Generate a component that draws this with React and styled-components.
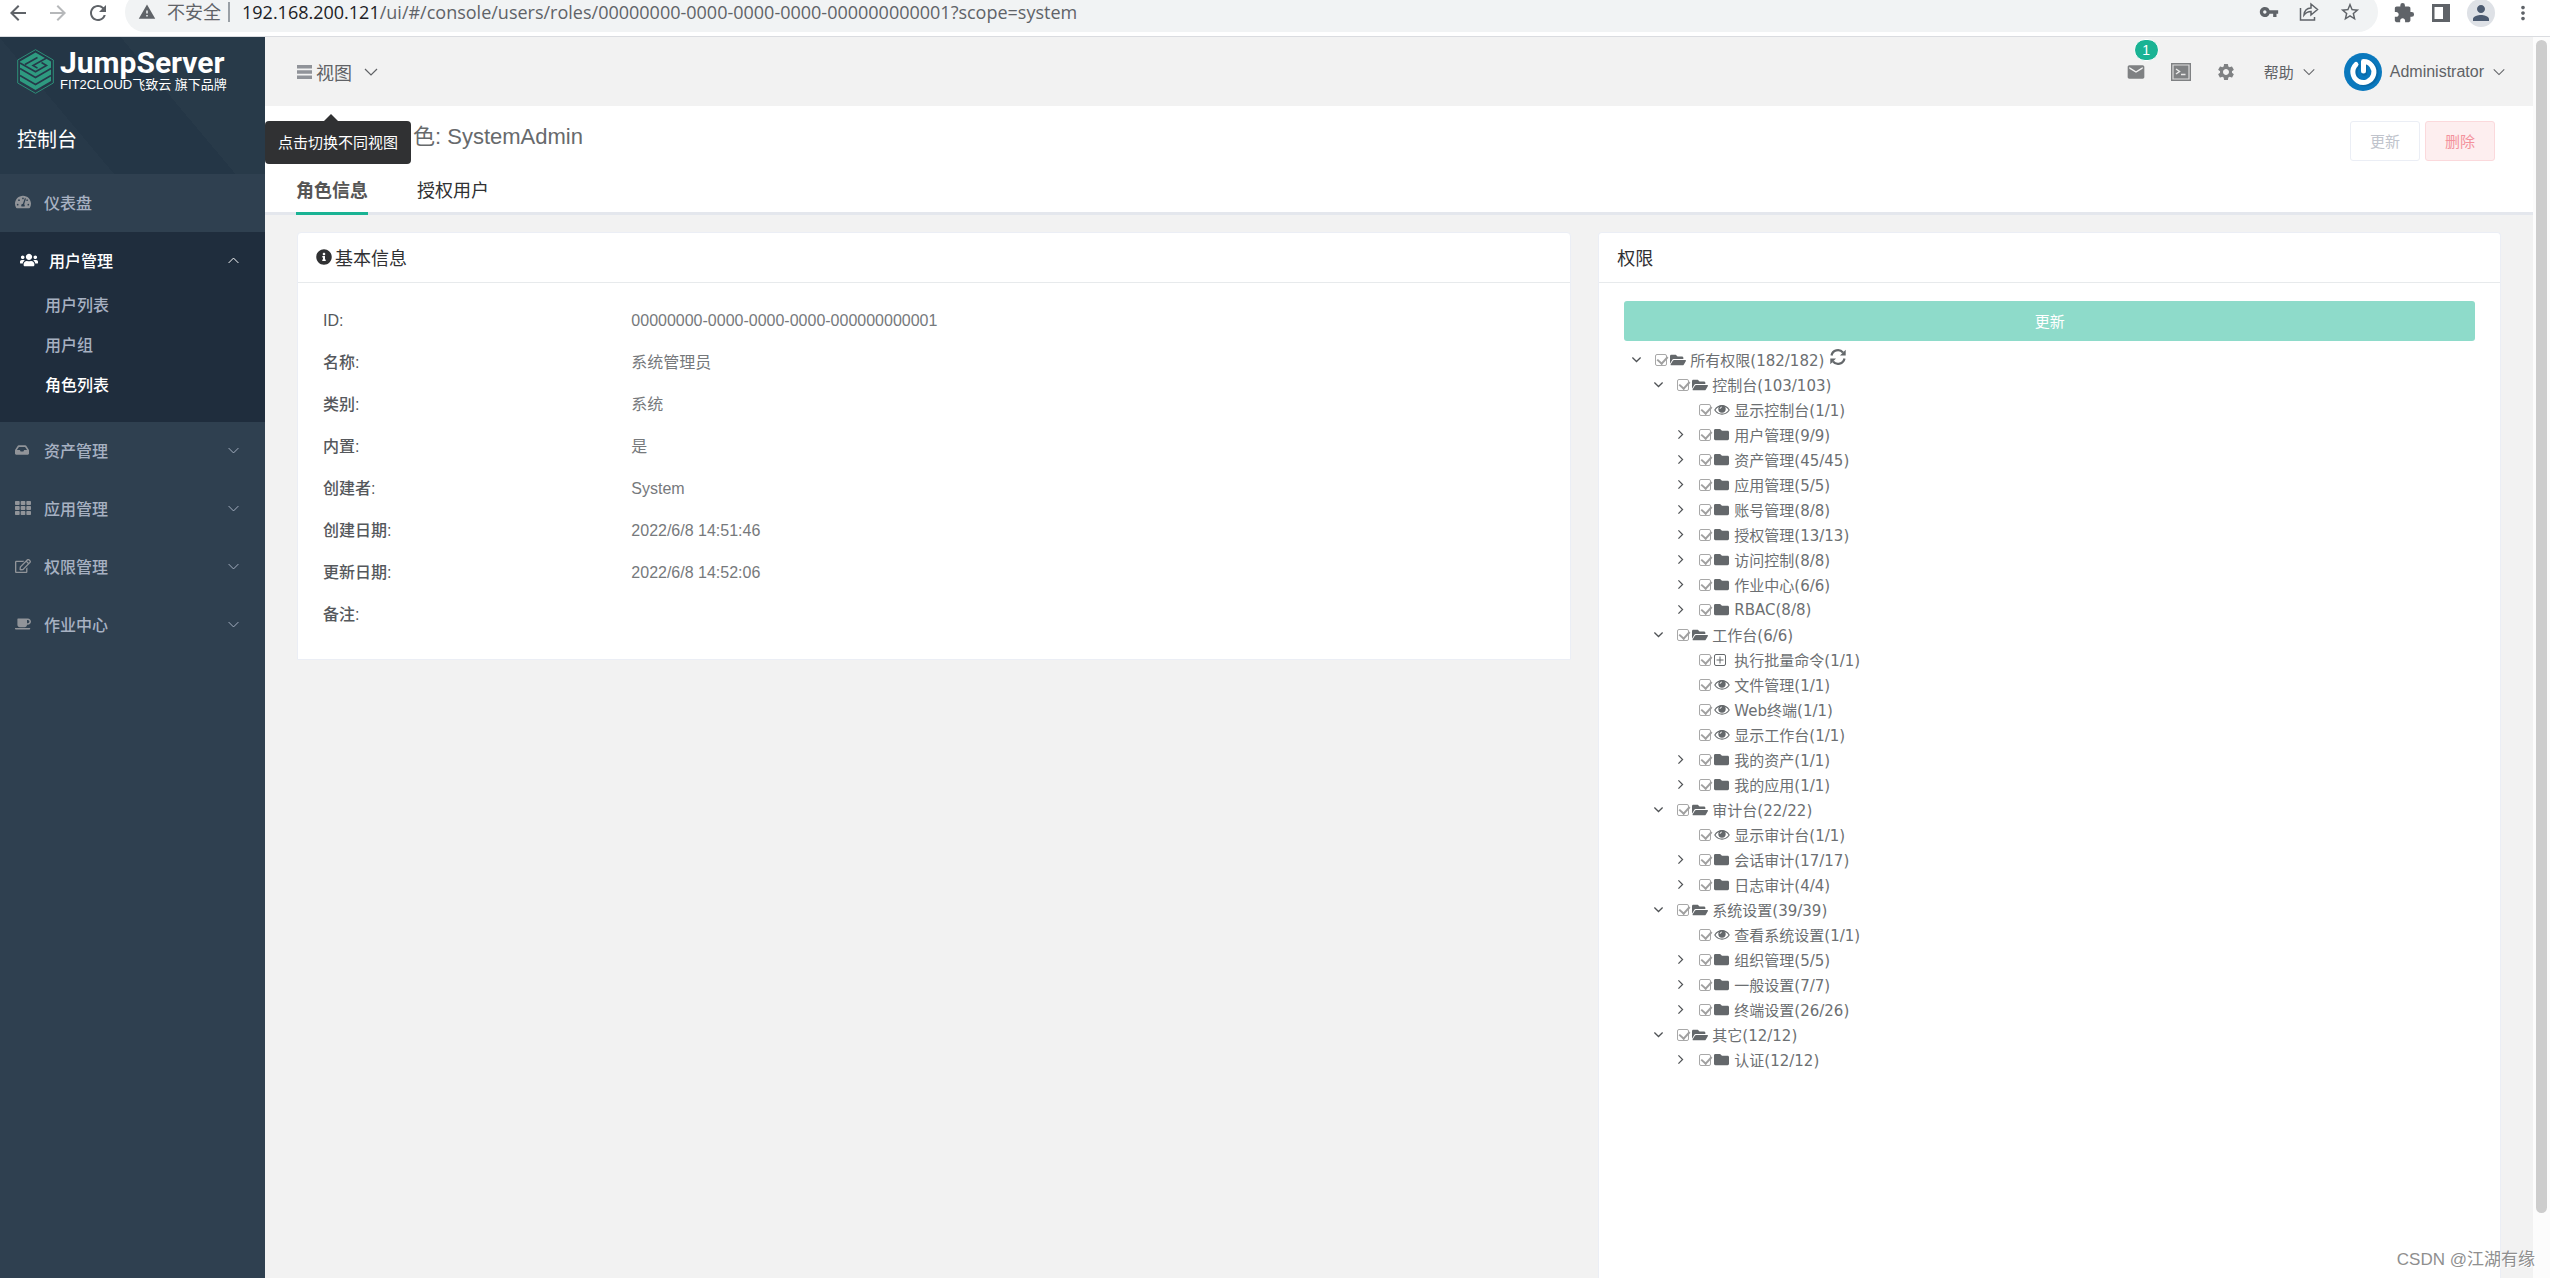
import React, { useState } from "react";
import styled, { createGlobalStyle, css } from "styled-components";
import {
  MdArrowBack,
  MdArrowForward,
  MdRefresh,
  MdWarning,
  MdVpnKey,
  MdStarBorder,
  MdExtension,
  MdPerson,
  MdMoreVert,
  MdEmail,
  MdSettings,
} from "react-icons/md";
import {
  FaTachometerAlt,
  FaUsers,
  FaInbox,
  FaTh,
  FaRegEdit,
  FaCoffee,
  FaInfoCircle,
  FaFolder,
  FaFolderOpen,
} from "react-icons/fa";

const GlobalStyle = createGlobalStyle`
  * {
    box-sizing: border-box;
  }

  body {
    margin: 0;
    overflow: hidden;
    font-family: "Liberation Sans", "Noto Sans CJK SC", sans-serif;
    font-size: 16px;
    color: #676a6c;
    background: #fff;
  }

  button {
    font-family: inherit;
    cursor: pointer;
  }

  svg {
    display: block;
    flex: none;
  }
`;

const Page = styled.div`
  display: flex;
  flex-direction: column;
  height: 100vh;
`;

/* browser bar */

const Browser = styled.div`
  display: flex;
  align-items: flex-start;
  gap: 15px;
  height: 37px;
  padding: 0 16px 0 6px;
  border-bottom: 1px solid #dadce0;
  background: #fff;
  color: #5f6368;
  overflow: hidden;
`;

const BrowserButtons = styled.div`
  display: flex;
  align-items: center;
  gap: 16px;
  height: 26px;
`;

const BrowserButton = styled.button`
  display: flex;
  padding: 0;
  border: 0;
  background: transparent;
  color: inherit;
  opacity: ${(p) => (p.disabled ? 0.45 : 1)};
`;

const Address = styled.div`
  display: flex;
  flex: 1;
  align-items: center;
  height: 40px;
  margin-top: -8px;
  padding: 0 17px 0 13px;
  border-radius: 20px;
  background: #f1f3f4;
  font-family: "Open Sans", "Noto Sans CJK SC", sans-serif;
  font-size: 18px;
  line-height: 24px;
`;

const Unsafe = styled.span`
  margin: 0 7px 0 11px;
`;

const Divider = styled.span`
  width: 2px;
  height: 20px;
  margin-right: 12px;
  background: #9aa0a6;
`;

const Url = styled.span`
  flex: 1;
  white-space: nowrap;
`;

const Host = styled.span`
  color: #202124;
`;

const AddressIcons = styled.div`
  display: flex;
  align-items: center;
  gap: 20px;
`;

const Profile = styled.span`
  display: flex;
  align-items: center;
  justify-content: center;
  width: 28px;
  height: 28px;
  border-radius: 50%;
  background: #dee1e6;
  color: #4b5a70;
`;

const ExtIcons = styled.div`
  display: flex;
  align-items: center;
  gap: 17px;
  height: 26px;
`;

/* layout */

const Shell = styled.div`
  display: flex;
  flex: 1;
  min-height: 0;
`;

const Sidebar = styled.nav`
  flex: 0 0 265px;
  background: #2f4050;
`;

const Main = styled.main`
  display: flex;
  flex: 1;
  flex-direction: column;
  min-width: 0;
  background: #f2f2f2;
`;

const ScrollTrack = styled.div`
  flex: 0 0 17px;
  padding: 3px;
  background: #fcfcfc;
`;

const ScrollThumb = styled.div`
  width: 11px;
  height: 95%;
  border-radius: 6px;
  background: #cdcdcd;
`;

/* sidebar */

const SideHead = styled.div`
  height: 137px;
  padding: 12px 17px 0;
  background: linear-gradient(
    50deg,
    #273949 0 30%,
    #243646 30% 62%,
    #283a49 62%
  );
  color: #fff;
`;

const Brand = styled.div`
  display: flex;
  gap: 6px;
`;

const BrandName = styled.div`
  font-family: Roboto, sans-serif;
  font-size: 30px;
  font-weight: 700;
  line-height: 28px;
`;

const BrandSub = styled.div`
  font-size: 13px;
  line-height: 16px;
  white-space: nowrap;
`;

const SideTitle = styled.div`
  margin-top: 32px;
  font-size: 20px;
  line-height: 28px;
`;

const MenuItem = styled.a`
  display: flex;
  align-items: center;
  height: ${(p) => (p.$active ? 50 : 58)}px;
  padding: 0 25px 2px ${(p) => (p.$active ? 20 : 15)}px;
  color: ${(p) => (p.$active ? "#fff" : "#a7b1c2")};
  font-weight: 500;
  text-decoration: none;
`;

const MenuIcon = styled.span`
  width: 29px;
  color: ${(p) => (p.$active ? "#fff" : "#919499")};
`;

const MenuLabel = styled.span`
  flex: 1;
`;

const MenuGroup = styled.div`
  padding: 4px 0 16px;
  background: #1f2d3d;
`;

const SubItem = styled.a`
  display: block;
  padding-left: 45px;
  line-height: 40px;
  color: ${(p) => (p.$active ? "#fff" : "#a7b1c2")};
  font-weight: 500;
  text-decoration: none;
`;

/* top bar */

const TopBar = styled.header`
  display: flex;
  align-items: center;
  justify-content: space-between;
  height: 69px;
  padding: 0 27px 0 32px;
`;

const TextButton = styled.button`
  display: flex;
  align-items: center;
  gap: ${(p) => p.$gap || 8}px;
  padding: 0;
  border: 0;
  background: transparent;
  color: #606266;
  font-size: ${(p) => p.$size || 16}px;
`;

const ViewLabel = styled.span`
  display: flex;
  align-items: center;
  gap: 4px;
`;

const TopRight = styled.div`
  display: flex;
  align-items: center;
  gap: 28px;
`;

const IconGroup = styled.div`
  display: flex;
  align-items: center;
  gap: 25px;
`;

const IconButton = styled.button`
  position: relative;
  display: flex;
  padding: 0;
  border: 0;
  background: transparent;
  color: #7f8183;
`;

const Badge = styled.span`
  position: absolute;
  top: -23px;
  left: 8px;
  width: 25px;
  border: 1px solid #fff;
  border-radius: 11px;
  background: #1ab394;
  color: #fff;
  font-size: 14px;
  line-height: 20px;
  text-align: center;
`;

const TooltipAnchor = styled.div`
  position: relative;
`;

const Tooltip = styled.div`
  position: absolute;
  z-index: 2;
  top: 62px;
  left: -32px;
  padding: 0 13px;
  border-radius: 4px;
  background: #303133;
  color: #fff;
  font-size: 15px;
  line-height: 43px;
  white-space: nowrap;

  &::before {
    content: "";
    position: absolute;
    top: -7px;
    left: 59px;
    border: 7px solid transparent;
    border-top: 0;
    border-bottom-color: #303133;
  }
`;

/* page heading */

const Heading = styled.section`
  height: 109px;
  padding: 0 38px 0 31px;
  border-bottom: 3px solid #e4e7ed;
  background: #fff;
`;

const HeadingRow = styled.div`
  display: flex;
  align-items: flex-start;
  justify-content: space-between;
  height: 62px;
  padding-top: 15px;
`;

const Title = styled.h1`
  margin: 0;
  padding-left: 51px;
  font-size: 22px;
  font-weight: 400;
  line-height: 32px;
`;

const Actions = styled.div`
  display: flex;
  gap: 5px;
`;

const ActionButton = styled.button`
  width: 70px;
  height: 40px;
  padding: 0 0 2px;
  border: 1px solid ${(p) => (p.$danger ? "#fbd9dc" : "#ebeef5")};
  border-radius: 3px;
  background: ${(p) => (p.$danger ? "#fdeeef" : "#fff")};
  color: ${(p) => (p.$danger ? "#f4929c" : "#c0c4cc")};
  font-size: 15px;
`;

const Tabs = styled.div`
  display: flex;
  gap: 49px;
`;

const Tab = styled.button`
  height: 47px;
  padding: 0 0 2px;
  border: 0;
  border-bottom: 3px solid ${(p) => (p.$active ? "#1ab394" : "transparent")};
  background: transparent;
  color: ${(p) => (p.$active ? "#555" : "#303133")};
  font-size: 18px;
  font-weight: ${(p) => (p.$active ? 700 : 400)};
`;

/* cards */

const Columns = styled.div`
  display: grid;
  flex: 1;
  grid-template-columns: 24fr 17fr;
  gap: 27px;
  min-height: 0;
  padding: 17px 32px 0;
`;

const Card = styled.section`
  align-self: ${(p) => (p.$fill ? "stretch" : "start")};
  border: 1px solid #ebeef5;
  border-bottom-width: ${(p) => (p.$fill ? 0 : 1)}px;
  border-radius: 4px 4px 0 0;
  background: #fff;
`;

const CardHead = styled.h2`
  display: flex;
  align-items: center;
  gap: 3px;
  height: 50px;
  margin: 0;
  padding: 0 18px 2px;
  border-bottom: 1px solid #e7eaec;
  color: #303133;
  font-size: 18px;
  font-weight: 400;
`;

const Details = styled.dl`
  display: grid;
  grid-template-columns: 1fr 3fr;
  margin: 0;
  padding: 17px 14px 23px 25px;
  line-height: 42px;
`;

const Term = styled.dt`
  color: #55585c;
  font-weight: 500;
`;

const Value = styled.dd`
  margin: 0;
  color: #76797c;
`;

const TreeBody = styled.div`
  padding: 18px 25px;
`;

const UpdateButton = styled.button`
  width: 100%;
  height: 40px;
  padding: 0 0 2px;
  border: 0;
  border-radius: 3px;
  background: #8edbca;
  color: #fff;
  font-size: 15px;
`;

const Tree = styled.ul`
  margin: 6px 0 0;
  padding: 0;
  list-style: none;
  font-family: "DejaVu Sans", "Noto Sans CJK SC", sans-serif;
  font-size: 15px;
  color: #6c6f72;
`;

const TreeRow = styled.li`
  display: flex;
  align-items: center;
  height: 25px;
  padding-left: ${(p) => 7 + p.$level * 22}px;
`;

const Toggle = styled.button`
  display: flex;
  width: 12px;
  height: 12px;
  margin-right: 12px;
  padding: 0;
  border: 0;
  background: transparent;
  color: #505356;
  visibility: ${(p) => (p.$hidden ? "hidden" : "visible")};
`;

const NodeLabel = styled.label`
  display: flex;
  align-items: center;
  white-space: nowrap;
`;

const Check = styled.input`
  position: relative;
  appearance: none;
  width: 12px;
  height: 12px;
  margin: 0 3px 0 0;
  border: 1px solid #a8a8a8;
  border-radius: 2px;

  ${(p) =>
    p.checked &&
    css`
      &::after {
        content: "";
        position: absolute;
        top: -1px;
        left: 3px;
        width: 5px;
        height: 8px;
        border: solid #a0a0a0;
        border-width: 0 2px 2px 0;
        transform: rotate(42deg);
      }
    `}
`;

const NodeIcon = styled.span`
  width: 20px;
  color: #64686b;
`;

const Refresh = styled.button`
  display: flex;
  margin: -6px 0 0 6px;
  padding: 0;
  border: 0;
  background: transparent;
  color: #64686b;
`;

const Watermark = styled.div`
  position: absolute;
  z-index: 3;
  right: 15px;
  bottom: 5px;
  color: #8f8f8f;
  font-size: 17px;
  line-height: 26px;
  text-shadow: 1px 1px 0 #fff;
`;

const Chevron = ({ dir = "down", size = 13, width = 1.2 }) => {
  const points = {
    down: "2,5 8,11 14,5",
    up: "2,11 8,5 14,11",
    right: "5,2 11,8 5,14",
  };

  return (
    <svg width={size} height={size} viewBox="0 0 16 16" fill="none">
      <polyline
        points={points[dir]}
        stroke="currentColor"
        strokeWidth={width}
      />
    </svg>
  );
};

const Burger = () => (
  <svg width="15" height="14" viewBox="0 0 15 14" fill="#909399">
    <path d="M0 0h15v3.500H0zM0 5.200h15v3.500H0zM0 10.400h15v3.500H0z" />
  </svg>
);

const ShareIcon = () => (
  <svg
    width="20"
    height="20"
    viewBox="0 0 20 20"
    fill="none"
    stroke="#5f6368"
    strokeWidth="1.5"
  >
    <path d="M1.500 6v12h14v-3" />
    <path d="M5 13c.5-4.500 3-7 7-7V2l6.500 5.500L12 13V9.500C9 9.500 7 10.500 5 13z" />
  </svg>
);

const PanelIcon = () => (
  <svg width="18" height="18" viewBox="0 0 18 18" fill="#5f6368">
    <path d="M0 0h18v18H0zM2.500 3v12H11V3z" fillRule="evenodd" />
  </svg>
);

const TerminalIcon = () => (
  <svg width="20" height="18" viewBox="0 0 20 18">
    <path d="M0 0h20v18H0z" fill="#7f8183" />
    <path d="M2 2h16v14H2z" fill="none" stroke="#dcdcdc" strokeWidth="1.200" />
    <path
      d="M5 6l3.500 2.500L5 11M10 11.500h4.500"
      fill="none"
      stroke="#e8e8e8"
      strokeWidth="1.500"
    />
  </svg>
);

const Avatar = () => (
  <svg width="38" height="38" viewBox="0 0 38 38">
    <circle cx="19" cy="19" r="19" fill="#0a78bd" />
    <path
      d="M12.500 12A10.500 10.500 0 1 0 19.500 8.600V19"
      fill="none"
      stroke="#075a91"
      strokeWidth="5.500"
      strokeLinecap="round"
      opacity="0.5"
      transform="translate(1 1)"
    />
    <path
      d="M12 11.500A10.500 10.500 0 1 0 19.500 8.500V18"
      fill="none"
      stroke="#fff"
      strokeWidth="5"
      strokeLinecap="round"
      strokeLinejoin="round"
    />
  </svg>
);

const LogoMark = () => (
  <svg width="37" height="45" viewBox="0 0 37 45">
    <path
      d="M18.500.7L36.300 11v23L18.500 44.300.7 34V11z"
      fill="none"
      stroke="#2d8f78"
      strokeWidth="1"
    />
    <path
      d="M18.500 3.500l15.500 9v19.500l-15.500 9-15.500-9V12.500z"
      fill="#2e9a80"
    />
    <path
      d="M29.500 9L16 16.500l4.500 2.600M8 15.500l12.500-7M24.500 13.500l5 3-11 6.300L3 14M3 19.500l15.500 9 15.500-9M3 26.500l15.500 9 15.500-9"
      fill="none"
      stroke="#263949"
      strokeWidth="1.600"
    />
  </svg>
);

const EyeIcon = () => (
  <svg width="16" height="12" viewBox="0 0 16 12">
    <path
      d="M.8 6C4.500.2 11.500.2 15.200 6 11.500 11.500 4.500 11.500.8 6z"
      fill="none"
      stroke="currentColor"
      strokeWidth="1.100"
    />
    <circle cx="8" cy="5" r="3.700" fill="currentColor" />
    <path d="M6 5a2 2 0 0 1 2-2" fill="none" stroke="#fff" strokeWidth=".8" />
  </svg>
);

const PlusIcon = () => (
  <svg
    width="12"
    height="12"
    viewBox="0 0 12 12"
    fill="none"
    stroke="currentColor"
  >
    <rect x=".5" y=".5" width="11" height="11" rx="1.500" />
    <path d="M6 2.500v7M2.500 6h7" />
  </svg>
);

const RefreshIcon = () => (
  <svg width="16" height="16" viewBox="0 0 16 16" fill="currentColor">
    <path
      d="M1.500 6.500A6.600 6.600 0 0 1 13 3.500M14.500 9.500A6.600 6.600 0 0 1 3 12.500"
      fill="none"
      stroke="currentColor"
      strokeWidth="2.200"
    />
    <path d="M15.700.8v5.700H10zM.3 15.200V9.500H6z" />
  </svg>
);

const icons = {
  open: <FaFolderOpen size={16} />,
  folder: <FaFolder size={15} />,
  eye: <EyeIcon />,
  plus: <PlusIcon />,
};

const menus = [
  { name: "资产管理", icon: <FaInbox size={14} /> },
  { name: "应用管理", icon: <FaTh size={16} /> },
  { name: "权限管理", icon: <FaRegEdit size={16} /> },
  { name: "作业中心", icon: <FaCoffee size={16} /> },
];

const details = [
  ["ID", "00000000-0000-0000-0000-000000000001"],
  ["名称", "系统管理员"],
  ["类别", "系统"],
  ["内置", "是"],
  ["创建者", "System"],
  ["创建日期", "2022/6/8 14:51:46"],
  ["更新日期", "2022/6/8 14:52:06"],
  ["备注", ""],
];

// [level, icon, text]
const nodes = [
  [0, "open", "所有权限(182/182)"],
  [1, "open", "控制台(103/103)"],
  [2, "eye", "显示控制台(1/1)"],
  [2, "folder", "用户管理(9/9)"],
  [2, "folder", "资产管理(45/45)"],
  [2, "folder", "应用管理(5/5)"],
  [2, "folder", "账号管理(8/8)"],
  [2, "folder", "授权管理(13/13)"],
  [2, "folder", "访问控制(8/8)"],
  [2, "folder", "作业中心(6/6)"],
  [2, "folder", "RBAC(8/8)"],
  [1, "open", "工作台(6/6)"],
  [2, "plus", "执行批量命令(1/1)"],
  [2, "eye", "文件管理(1/1)"],
  [2, "eye", "Web终端(1/1)"],
  [2, "eye", "显示工作台(1/1)"],
  [2, "folder", "我的资产(1/1)"],
  [2, "folder", "我的应用(1/1)"],
  [1, "open", "审计台(22/22)"],
  [2, "eye", "显示审计台(1/1)"],
  [2, "folder", "会话审计(17/17)"],
  [2, "folder", "日志审计(4/4)"],
  [1, "open", "系统设置(39/39)"],
  [2, "eye", "查看系统设置(1/1)"],
  [2, "folder", "组织管理(5/5)"],
  [2, "folder", "一般设置(7/7)"],
  [2, "folder", "终端设置(26/26)"],
  [1, "open", "其它(12/12)"],
  [2, "folder", "认证(12/12)"],
];

const BrowserBar = () => (
  <Browser>
    <BrowserButtons>
      <BrowserButton aria-label="back">
        <MdArrowBack size={24} />
      </BrowserButton>
      <BrowserButton aria-label="forward" disabled>
        <MdArrowForward size={24} />
      </BrowserButton>
      <BrowserButton aria-label="reload">
        <MdRefresh size={24} />
      </BrowserButton>
    </BrowserButtons>
    <Address>
      <MdWarning size={18} />
      <Unsafe>不安全</Unsafe>
      <Divider />
      <Url>
        <Host>192.168.200.121</Host>
        /ui/#/console/users/roles/00000000-0000-0000-0000-000000000001?scope=system
      </Url>
      <AddressIcons>
        <MdVpnKey size={20} />
        <ShareIcon />
        <MdStarBorder size={22} />
      </AddressIcons>
    </Address>
    <ExtIcons>
      <MdExtension size={22} />
      <PanelIcon />
      <Profile>
        <MdPerson size={24} />
      </Profile>
      <MdMoreVert size={22} />
    </ExtIcons>
  </Browser>
);

const SideMenu = () => (
  <Sidebar>
    <SideHead>
      <Brand>
        <LogoMark />
        <div>
          <BrandName>JumpServer</BrandName>
          <BrandSub>FIT2CLOUD飞致云 旗下品牌</BrandSub>
        </div>
      </Brand>
      <SideTitle>控制台</SideTitle>
    </SideHead>
    <MenuItem href="#dashboard">
      <MenuIcon>
        <FaTachometerAlt size={16} />
      </MenuIcon>
      <MenuLabel>仪表盘</MenuLabel>
    </MenuItem>
    <MenuGroup>
      <MenuItem href="#users" $active>
        <MenuIcon $active>
          <FaUsers size={18} />
        </MenuIcon>
        <MenuLabel>用户管理</MenuLabel>
        <Chevron dir="up" />
      </MenuItem>
      <SubItem href="#user-list">用户列表</SubItem>
      <SubItem href="#user-group">用户组</SubItem>
      <SubItem href="#role-list" $active>
        角色列表
      </SubItem>
    </MenuGroup>
    {menus.map((m) => (
      <MenuItem href="#menu" key={m.name}>
        <MenuIcon>{m.icon}</MenuIcon>
        <MenuLabel>{m.name}</MenuLabel>
        <Chevron />
      </MenuItem>
    ))}
  </Sidebar>
);

const Header = () => (
  <TopBar>
    <TooltipAnchor>
      <TextButton $size={18} $gap={11}>
        <ViewLabel>
          <Burger />
          视图
        </ViewLabel>
        <Chevron size={16} />
      </TextButton>
      <Tooltip role="tooltip">点击切换不同视图</Tooltip>
    </TooltipAnchor>
    <TopRight>
      <IconGroup>
        <IconButton aria-label="messages">
          <MdEmail size={20} />
          <Badge>1</Badge>
        </IconButton>
        <IconButton aria-label="terminal">
          <TerminalIcon />
        </IconButton>
        <IconButton aria-label="settings">
          <MdSettings size={20} />
        </IconButton>
      </IconGroup>
      <TextButton $size={15}>
        帮助
        <Chevron size={14} />
      </TextButton>
      <TextButton>
        <Avatar />
        Administrator
        <Chevron size={14} />
      </TextButton>
    </TopRight>
  </TopBar>
);

const PermissionTree = () => {
  const [checked, setChecked] = useState(nodes.map(() => true));

  const toggle = (index) =>
    setChecked(checked.map((c, i) => (i === index ? !c : c)));

  return (
    <Tree>
      {nodes.map(([level, icon, text], i) => (
        <TreeRow key={text} $level={level}>
          <Toggle
            aria-label="toggle"
            $hidden={icon === "eye" || icon === "plus"}
          >
            <Chevron
              dir={icon === "open" ? "down" : "right"}
              size={11}
              width={1.8}
            />
          </Toggle>
          <NodeLabel>
            <Check
              type="checkbox"
              checked={checked[i]}
              onChange={() => toggle(i)}
            />
            <NodeIcon>{icons[icon]}</NodeIcon>
            {text}
          </NodeLabel>
          {level === 0 && (
            <Refresh aria-label="refresh">
              <RefreshIcon />
            </Refresh>
          )}
        </TreeRow>
      ))}
    </Tree>
  );
};

const App = () => {
  const [tab, setTab] = useState("角色信息");

  return (
    <Page>
      <GlobalStyle />
      <BrowserBar />
      <Shell>
        <SideMenu />
        <Main>
          <Header />
          <Heading>
            <HeadingRow>
              <Title>系统角色: SystemAdmin</Title>
              <Actions>
                <ActionButton>更新</ActionButton>
                <ActionButton $danger>删除</ActionButton>
              </Actions>
            </HeadingRow>
            <Tabs role="tablist">
              {["角色信息", "授权用户"].map((name) => (
                <Tab
                  key={name}
                  role="tab"
                  $active={tab === name}
                  onClick={() => setTab(name)}
                >
                  {name}
                </Tab>
              ))}
            </Tabs>
          </Heading>
          <Columns>
            <Card>
              <CardHead>
                <FaInfoCircle size={16} />
                基本信息
              </CardHead>
              <Details>
                {details.map(([name, value]) => (
                  <React.Fragment key={name}>
                    <Term>{name}:</Term>
                    <Value>{value}</Value>
                  </React.Fragment>
                ))}
              </Details>
            </Card>
            <Card $fill>
              <CardHead>权限</CardHead>
              <TreeBody>
                <UpdateButton>更新</UpdateButton>
                <PermissionTree />
              </TreeBody>
            </Card>
          </Columns>
        </Main>
        <ScrollTrack>
          <ScrollThumb />
        </ScrollTrack>
      </Shell>
      <Watermark>CSDN @江湖有缘</Watermark>
    </Page>
  );
};

export default App;
